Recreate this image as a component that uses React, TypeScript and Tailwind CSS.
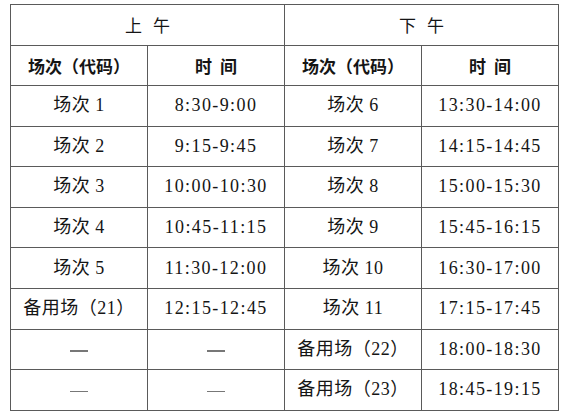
import React from "react";

const rows: [string, string, string, string][] = [
  ["场次 1", "8:30-9:00", "场次 6", "13:30-14:00"],
  ["场次 2", "9:15-9:45", "场次 7", "14:15-14:45"],
  ["场次 3", "10:00-10:30", "场次 8", "15:00-15:30"],
  ["场次 4", "10:45-11:15", "场次 9", "15:45-16:15"],
  ["场次 5", "11:30-12:00", "场次 10", "16:30-17:00"],
  ["备用场（21）", "12:15-12:45", "场次 11", "17:15-17:45"],
  ["--", "--", "备用场（22）", "18:00-18:30"],
  ["--", "--", "备用场（23）", "18:45-19:15"],
];

const serif = "font-['Liberation_Serif','Noto_Sans_CJK_SC',serif]";
const sans = "font-['Noto_Sans_CJK_SC','Liberation_Sans',sans-serif]";

function Cell({ text, time }: { text: string; time: boolean }) {
  if (text === "--") {
    return (
      <td className="border border-[#5a5a5a] text-center align-middle">
        <span className="inline-block w-[18px] h-[1.5px] bg-[#777] align-middle" />
      </td>
    );
  }
  return (
    <td
      className={`border border-[#5a5a5a] text-center align-middle text-[18px] text-[#151515] ${serif} ${
        time ? "tracking-[1.4px]" : "tracking-[0.5px]"
      }`}
    >
      {text}
    </td>
  );
}

export default function App() {
  return (
    <div className="bg-white w-[565px] h-[419px] pl-[10px] pt-[4px]">
      <table className="border-collapse w-[548px] table-fixed border-[1.5px] border-[#555]">
        <colgroup>
          <col className="w-[137px]" />
          <col className="w-[137px]" />
          <col className="w-[137px]" />
          <col className="w-[137px]" />
        </colgroup>
        <tbody>
          <tr className="h-[41px]">
            <td
              colSpan={2}
              className={`border border-[#5a5a5a] text-center align-middle text-[17px] text-[#151515] ${sans}`}
            >
              <span className="inline-flex gap-[11px]">
                <span>上</span>
                <span>午</span>
              </span>
            </td>
            <td
              colSpan={2}
              className={`border border-[#5a5a5a] text-center align-middle text-[17px] text-[#151515] ${sans}`}
            >
              <span className="inline-flex gap-[11px]">
                <span>下</span>
                <span>午</span>
              </span>
            </td>
          </tr>
          <tr className="h-[40px]">
            {["场次（代码）", "时间", "场次（代码）", "时间"].map((t, i) => (
              <td
                key={i}
                className={`border border-[#5a5a5a] text-center align-middle text-[17px] font-bold text-[#151515] ${sans}`}
              >
                {t === "时间" ? (
                  <span className="inline-flex gap-[8px]">
                    <span>时</span>
                    <span>间</span>
                  </span>
                ) : (
                  t
                )}
              </td>
            ))}
          </tr>
          {rows.map((r, i) => (
            <tr key={i} className="h-[40.6px]">
              {r.map((c, j) => (
                <Cell key={j} text={c} time={j % 2 === 1} />
              ))}
            </tr>
          ))}
        </tbody>
      </table>
    </div>
  );
}
